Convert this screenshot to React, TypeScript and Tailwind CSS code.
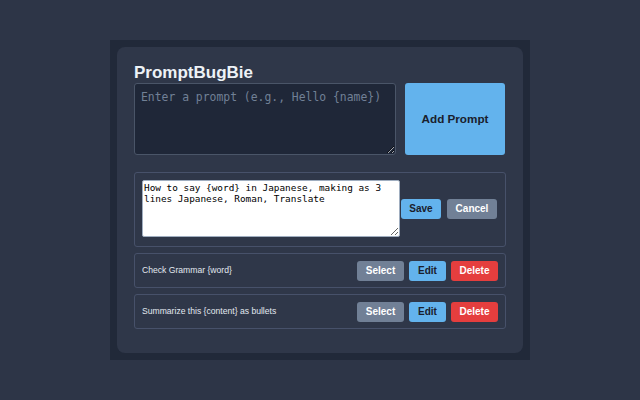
import React from "react";

export default function App() {
  const items = ["Check Grammar {word}", "Summarize this {content} as bullets"];
  return (
    <div className="w-[640px] h-[400px] bg-[#2d3547] flex items-center justify-center" style={{ fontFamily: '"Liberation Sans", Arial, sans-serif' }}>
      <div className="w-[420px] h-[320px] bg-[#212939] p-[7px]">
        <div className="h-full rounded-[8px] bg-[#2f3749] px-[17px] pt-[16px]">
          <h1 className="text-[17px] leading-[20px] font-bold text-[#edf2f7]">PromptBugBie</h1>
          <div className="flex gap-[9px]">
            <textarea
              placeholder="Enter a prompt (e.g., Hello {name})"
              className="w-[262px] h-[72px] bg-[#1f2738] border border-[#4a5568] rounded-[3px] px-[6px] pt-[5px] text-[11.4px] leading-[16px] text-[#e2e8f0] placeholder:text-[#718096] outline-none"
              style={{ fontFamily: '"DejaVu Sans Mono", monospace' }}
            />
            <button className="w-[100px] h-[72px] bg-[#63b3ed] rounded-[3px] text-[11.7px] font-bold text-[#1a202c]">Add Prompt</button>
          </div>
          <div className="mt-[17px] h-[75px] border border-[#47516a] rounded-[3px] flex items-center pl-[7px] pr-[7px] pb-[2px]">
            <textarea
              defaultValue="How to say {word} in Japanese, making as 3 lines Japanese, Roman, Translate"
              className="w-[258px] h-[57px] bg-white border border-[#a0aec0] rounded-[2px] px-[1px] py-[1px] text-[9.4px] leading-[11px] text-black outline-none resize-y"
              style={{ fontFamily: '"DejaVu Sans Mono", monospace' }}
            />
            <button className="ml-[1px] w-[40px] h-[20px] bg-[#63b3ed] rounded-[3px] text-[10px] font-bold text-[#1a202c]">Save</button>
            <button className="ml-[6px] w-[50px] h-[20px] bg-[#718096] rounded-[3px] text-[10px] font-bold text-white">Cancel</button>
          </div>
          <div className="mt-[6px] flex flex-col gap-[6px]">
            {items.map((t) => (
              <div key={t} className="h-[35px] border border-[#47516a] rounded-[3px] flex items-center pl-[7px] pr-[7px]">
                <span className="flex-1 text-[8.6px] text-[#e2e8f0]">{t}</span>
                <button className="w-[47px] h-[20px] bg-[#718096] rounded-[3px] text-[10px] font-bold text-white">Select</button>
                <button className="ml-[5px] w-[37px] h-[20px] bg-[#63b3ed] rounded-[3px] text-[10px] font-bold text-[#1a202c]">Edit</button>
                <button className="ml-[5px] w-[47px] h-[20px] bg-[#e53e3e] rounded-[3px] text-[10px] font-bold text-white">Delete</button>
              </div>
            ))}
          </div>
        </div>
      </div>
    </div>
  );
}
